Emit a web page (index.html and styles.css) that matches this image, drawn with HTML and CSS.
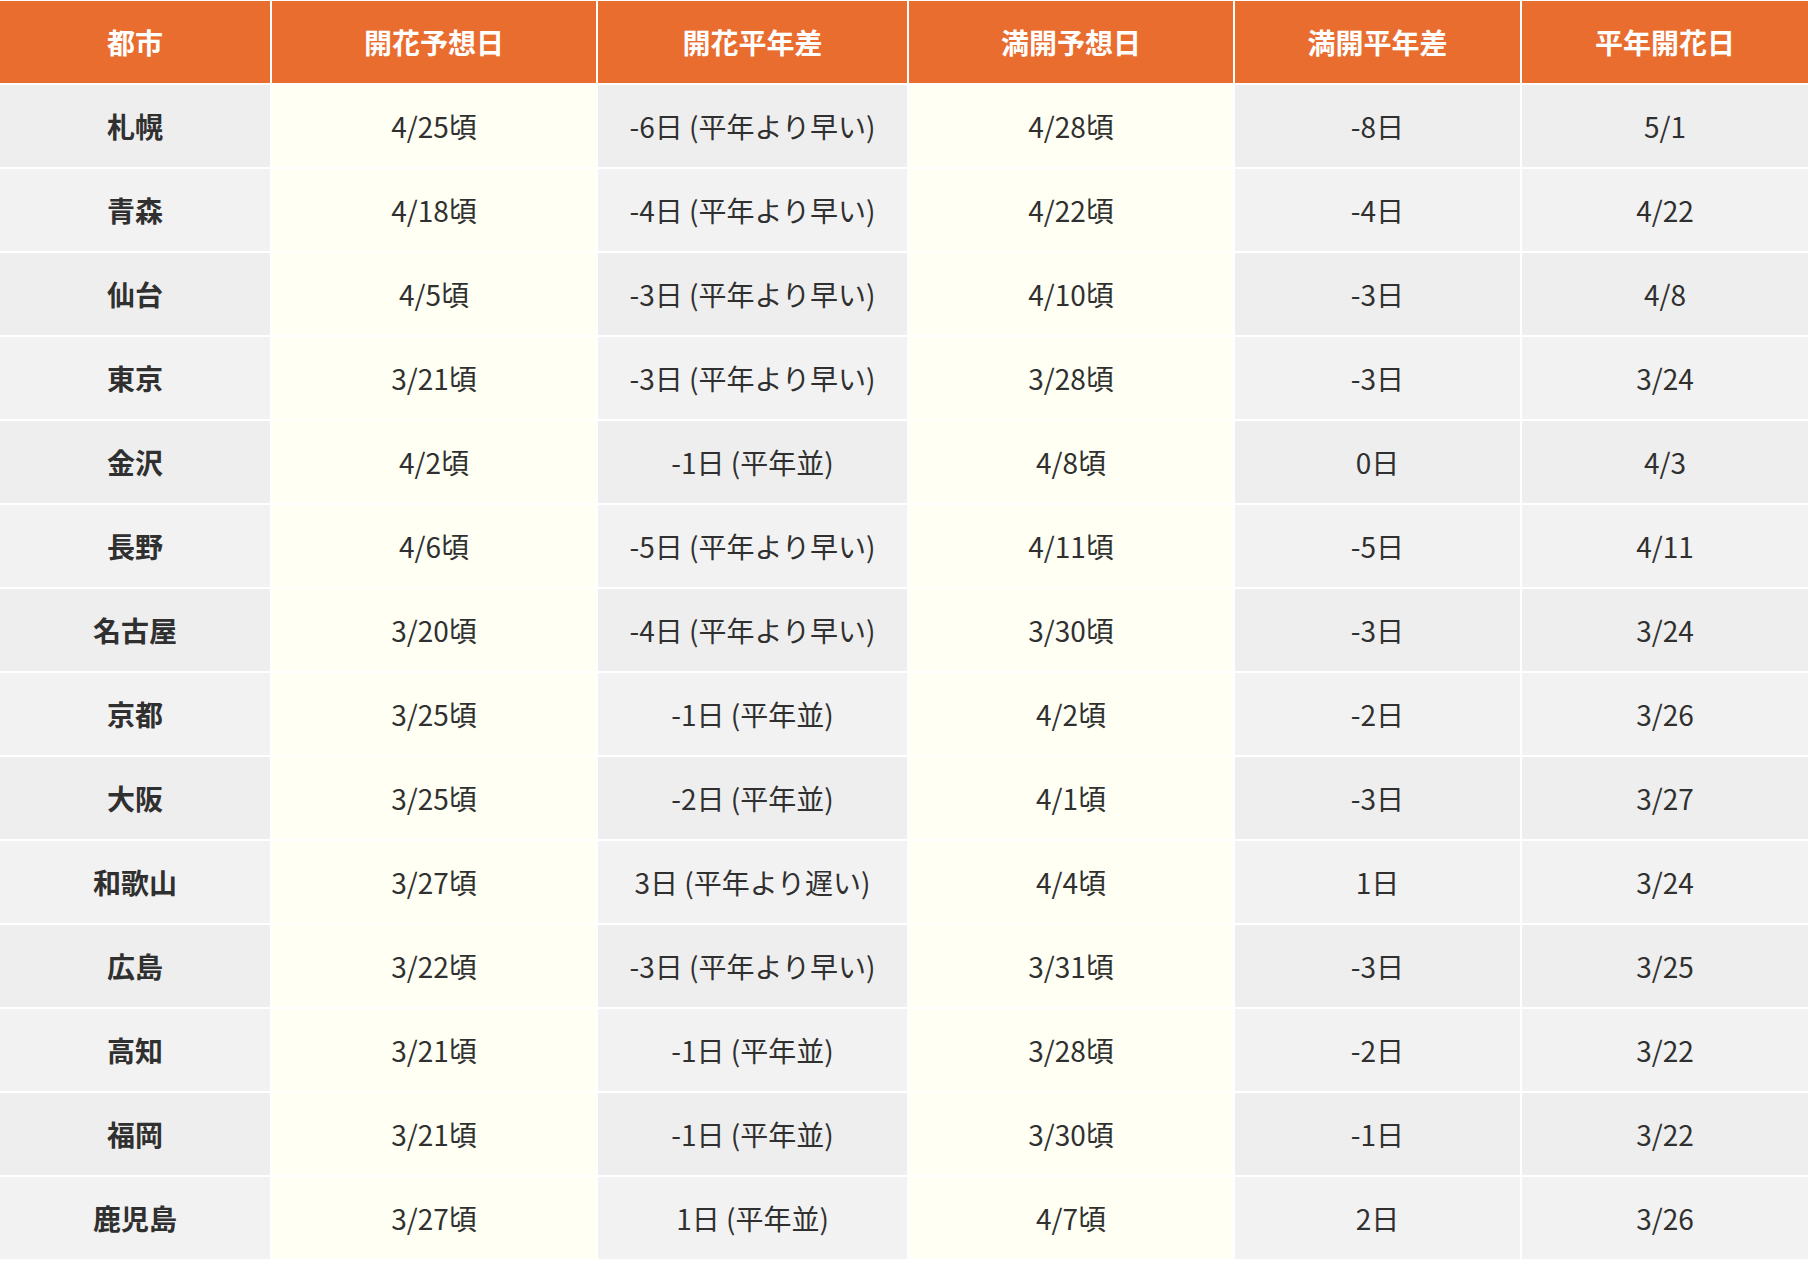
FILE: index.html
```html
<!DOCTYPE html>
<html lang="ja">
<head>
<meta charset="utf-8">
<title>桜開花予想</title>
<link rel="stylesheet" href="styles.css">
</head>
<body>
<div class="table">
  <div class="th">都市</div><div class="th">開花予想日</div><div class="th">開花平年差</div><div class="th">満開予想日</div><div class="th">満開平年差</div><div class="th">平年開花日</div>

  <div class="td city odd">札幌</div><div class="td hl">4/25頃</div><div class="td odd">-6日 (平年より早い)</div><div class="td hl">4/28頃</div><div class="td odd">-8日</div><div class="td odd">5/1</div>
  <div class="td city even">青森</div><div class="td hl">4/18頃</div><div class="td even">-4日 (平年より早い)</div><div class="td hl">4/22頃</div><div class="td even">-4日</div><div class="td even">4/22</div>
  <div class="td city odd">仙台</div><div class="td hl">4/5頃</div><div class="td odd">-3日 (平年より早い)</div><div class="td hl">4/10頃</div><div class="td odd">-3日</div><div class="td odd">4/8</div>
  <div class="td city even">東京</div><div class="td hl">3/21頃</div><div class="td even">-3日 (平年より早い)</div><div class="td hl">3/28頃</div><div class="td even">-3日</div><div class="td even">3/24</div>
  <div class="td city odd">金沢</div><div class="td hl">4/2頃</div><div class="td odd">-1日 (平年並)</div><div class="td hl">4/8頃</div><div class="td odd">0日</div><div class="td odd">4/3</div>
  <div class="td city even">長野</div><div class="td hl">4/6頃</div><div class="td even">-5日 (平年より早い)</div><div class="td hl">4/11頃</div><div class="td even">-5日</div><div class="td even">4/11</div>
  <div class="td city odd">名古屋</div><div class="td hl">3/20頃</div><div class="td odd">-4日 (平年より早い)</div><div class="td hl">3/30頃</div><div class="td odd">-3日</div><div class="td odd">3/24</div>
  <div class="td city even">京都</div><div class="td hl">3/25頃</div><div class="td even">-1日 (平年並)</div><div class="td hl">4/2頃</div><div class="td even">-2日</div><div class="td even">3/26</div>
  <div class="td city odd">大阪</div><div class="td hl">3/25頃</div><div class="td odd">-2日 (平年並)</div><div class="td hl">4/1頃</div><div class="td odd">-3日</div><div class="td odd">3/27</div>
  <div class="td city even">和歌山</div><div class="td hl">3/27頃</div><div class="td even">3日 (平年より遅い)</div><div class="td hl">4/4頃</div><div class="td even">1日</div><div class="td even">3/24</div>
  <div class="td city odd">広島</div><div class="td hl">3/22頃</div><div class="td odd">-3日 (平年より早い)</div><div class="td hl">3/31頃</div><div class="td odd">-3日</div><div class="td odd">3/25</div>
  <div class="td city even">高知</div><div class="td hl">3/21頃</div><div class="td even">-1日 (平年並)</div><div class="td hl">3/28頃</div><div class="td even">-2日</div><div class="td even">3/22</div>
  <div class="td city odd">福岡</div><div class="td hl">3/21頃</div><div class="td odd">-1日 (平年並)</div><div class="td hl">3/30頃</div><div class="td odd">-1日</div><div class="td odd">3/22</div>
  <div class="td city even">鹿児島</div><div class="td hl">3/27頃</div><div class="td even">1日 (平年並)</div><div class="td hl">4/7頃</div><div class="td even">2日</div><div class="td even">3/26</div>
</div>
</body>
</html>
```

FILE: styles.css
```css
html, body {
  margin: 0;
  padding: 0;
  background: #ffffff;
}
body {
  padding-top: 1px;
  font-family: "Noto Sans CJK JP", "Noto Sans", sans-serif;
  color: #303030;
}
.table {
  display: grid;
  grid-template-columns: 270px 324px 309px 324px 285px 286px;
  grid-auto-rows: 82px;
  gap: 2px;
}
.th, .td {
  display: flex;
  align-items: center;
  justify-content: center;
  font-size: 28px;
  line-height: 1;
  white-space: nowrap;
}
.th {
  background: #e96d2f;
  color: #ffffff;
  font-weight: 700;
}
.td {
  font-weight: 400;
}
.city {
  font-weight: 700;
}
.odd {
  background: #eeeeee;
}
.even {
  background: #f2f2f2;
}
.hl {
  background: #fffff4;
}
```
